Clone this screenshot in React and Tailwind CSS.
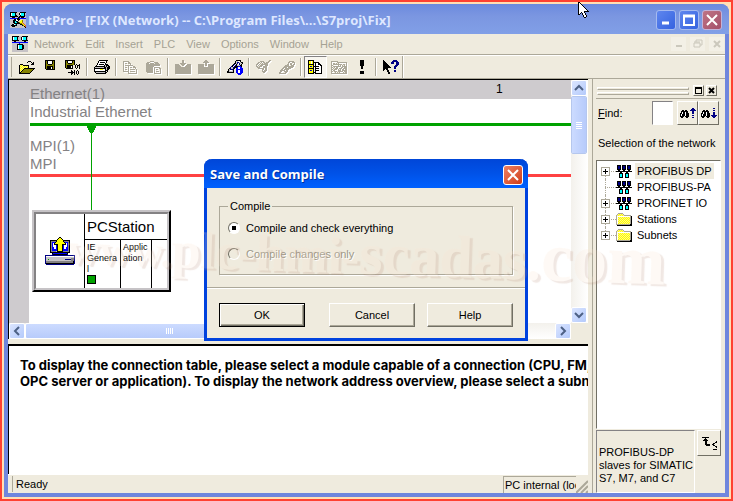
import clsx from "clsx";

const COLORS = {
  k: "#000000",
  w: "#ffffff",
  y: "#ffff00",
  Y: "#fff784",
  o: "#848200",
  g: "#848284",
  s: "#c6c3c6",
  b: "#0000ff",
  n: "#000084",
  c: "#00ffff",
  d: "#aca899",
  r: "#e0522d",
  G: "#00a200",
};

const ICONS = {
  app: [
    "kkkkkkkssskkkkkk",
    "kwccckssskwcccks",
    "kwccckssskwcccks",
    "kwccckkssskccck.",
    "kkkkkkkkskkkkkks",
    "sskkkssskkskkkss",
    "bbbbbbbkkbbbbbbb",
    "sssskkwkkksYssss",
    "ssskkkwwksYyosss",
    "ssskkckksYyyosss",
    "ssskkcckkoyyrsss",
    "sssskkkkkkooyrss",
    "sskkwckssskkoyrs",
    "skkkkkkssssskoyr",
    "sskkkssssssssskr",
    "sssssssssssssssk",
  ],
  network: [
    "kkkkkkkssskkkkkk",
    "kwccckssskwcccks",
    "kwccckssskwcccks",
    "kwccckssskwcccks",
    "kkkkkkkssskkkkkk",
    "sskksssssssskkss",
    "bbbbbbbbbbbbbbbb",
    "sssssssbssssssss",
    "ssssskkkkkksssss",
    "ssssskwccckkssss",
    "ssssskwccckkssss",
    "ssssskwccckkssss",
    "ssssskwccckkssss",
    "ssssskkkkkksssss",
    "ssssssssssssssss",
    "ssssssssssssssss",
  ],
  open: [
    ".........kkk....",
    "........k...k.k.",
    ".............kk.",
    ".kkk........kkk.",
    "kYyYkkkkkk......",
    "kyYyYyYyYk......",
    "kYyYyYyYyk......",
    "kyYyYkkkkkkkkkkk",
    "kYyYkoooooooook.",
    "kyYkoooooooook..",
    "kYkoooooooook...",
    "kkoooooooook....",
    "kkkkkkkkkkk.....",
  ],
  save: [
    "kkkkkkkkkk",
    "kokwwwwkok",
    "kokwwwwkok",
    "kokwwwwkok",
    "kookkkkook",
    "kooooooook",
    "kokkkkkkok",
    "kokkkkwkok",
    "kokkkkwkok",
    ".kkkkkkkkk",
    "..........",
    "..........",
    "..........",
    "..........",
    "..........",
  ],
  saveCompile: [
    "kkkkkkkkkk......",
    "kokwwwwkok......",
    "kokwwwwkok......",
    "kookkkkook......",
    "kooooooook.k..k.",
    "kokkkkkk..k.kkk.",
    "kokkkkwk..k.k.k.",
    "kokkkkwk..k.k.k.",
    ".kkkkkkk...k..k.",
    "................",
    "......k..k..k...",
    "......kk.k.k.k..",
    "...kkkkkkk.k.k..",
    "......kk.k.k.k..",
    "......k..k..k...",
  ],
  print: [
    ".....kkkkkkkkk..",
    "....kwwwwwwwk...",
    "....kwkkkkkwk...",
    "...kwwwwwwwk....",
    "...kwkkkkkwkkk..",
    "..kwwwwwwwkskkk.",
    ".kkkkkkkkkkskskk",
    "kssssssssskkskkk",
    "kkkkkkkkkkkkskkk",
    "kwwwwwyyywwkskk.",
    "kwwwwwwwwwwkkk..",
    "kkkkkkkkkkkk.k..",
    ".kssssssssskk...",
    "..kkkkkkkkkk....",
  ],
  copy: [
    "dddddd.........",
    "d....dd........",
    "d.dd.ddd.......",
    "d......d.......",
    "d.dddddddd.....",
    "d....d....dd...",
    "d.dd.d.dd.ddd..",
    "d....d......d..",
    "d.dd.d.ddddd.d.",
    "d....d.......d.",
    "dddddd.ddddd.d.",
    ".....d.......d.",
    ".....ddddddddd.",
  ],
  paste: [
    "....dddd.......",
    ".ddd....dddd...",
    "ddd.dddd.dddd..",
    "dddddddddddddd.",
    "dddddddddddddd.",
    "dddddddd.......",
    "ddddddd.dddddd.",
    "ddddddd.d....dd",
    "ddddddd.d.dd..d",
    "ddddddd.d.....d",
    "ddddddd.d.ddd.d",
    ".dddddd.d.....d",
    "........ddddddd",
  ],
  download: [
    ".......dd.......",
    ".......dd.......",
    ".......dd.......",
    ".....dddddd.....",
    "dddd..dddd..dddd",
    "ddddd..dd..ddddd",
    "dddddd....dddddd",
    "dddddddddddddddd",
    "dddddddddddddddd",
    "dddddddddddddddd",
    "dddddddddddddddd",
    "dddddddddddddddd",
    "dddddddddddddddd",
    "dddddddddddddddd",
  ],
  upload: [
    ".......dd.......",
    "......dddd......",
    ".....dddddd.....",
    ".......dd.......",
    "dddddd.dd.dddddd",
    "dddddd.dd.dddddd",
    "dddddd....dddddd",
    "dddddddddddddddd",
    "dddddddddddddddd",
    "dddddddddddddddd",
    "dddddddddddddddd",
    "dddddddddddddddd",
    "dddddddddddddddd",
    "dddddddddddddddd",
  ],
  stationInfo: [
    ".........kkkkk..",
    "........ksswwk..",
    "........ksnnsskk",
    ".......kksnwnssk",
    "......kn.kswnsk.",
    ".....knwnkssskk.",
    "....nkwnkkkbbbk.",
    "...nssnkkkbwwbb.",
    "..knssnk.bbwwbbb",
    ".ksnnnk..bbbbbbb",
    ".kswwsk..bbwwbbb",
    "kkssssk..bbwwbbb",
    "kkkkkkk..bbwwbbb",
    "..........bbbbb.",
    "...........bbb..",
  ],
  plug: [
    ".............dd.",
    "....dddd....dd..",
    "..dd.d.dd.ddd...",
    ".dd.d.d.dddd....",
    "dd.d.ddddddd....",
    "d.d.ddd..ddd....",
    "dd.ddd.dddd.....",
    ".ddd...dddd.....",
    "..dddddd.dd.....",
    "......dd.dd.....",
    "......d.ddd.....",
    "......dddd......",
    ".......dd.......",
    "................",
  ],
  connect: [
    "..........ddddd.",
    ".........dd..ddd",
    ".........d.dd..d",
    "........dd.dd.dd",
    "......dddd..ddd.",
    ".....dddddddddd.",
    "....dddd.ddddd..",
    "...dd.dddddd....",
    "..dd.ddddd......",
    ".ddddd.dd.......",
    ".dd..dddd.......",
    "dd....dd........",
    "ddddddd.........",
  ],
  catalog: [
    "kkkkkk.........",
    "kyywyk.........",
    "kyywykkkkkk....",
    "kyywyk.kwwkk...",
    "kkkkkk.kwwkkk..",
    "kyyyyk.kwwwwkk.",
    "kynbykkkkkkwwk.",
    "kyyyyk.kwwwwwk.",
    "kkkkkk.kkkkwwk.",
    "kyyyyk.kwwwwwk.",
    "kynbyk.kkkkwwk.",
    "kyyyyk.kwwwwwk.",
    "kyyyykkkwwwwwk.",
    "kkkkkk.kkkkkkk.",
  ],
  netView: [
    "ddddddd.........",
    "d.....dddddddddd",
    "d.dd.d.d.......d",
    "d.ddddddddd.dd.d",
    "dd.....d.d.d.d.d",
    "d.dddddddd.ddddd",
    "dd.d.dd...dd.ddd",
    "d.d.ddd.ddd.dddd",
    "dd.ddd.d.d.dd.dd",
    "d.dd...ddd.ddddd",
    "dd.ddd.ddddd.ddd",
    "d...d.d.d...d.dd",
    "dddddddddddddddd",
  ],
  alert: [
    "kkkk",
    "kkkk",
    "kkkk",
    "kkkk",
    "kkkk",
    "kkkk",
    ".kk.",
    ".kk.",
    ".kk.",
    "....",
    "....",
    "kkkk",
    "kkkk",
    "kkkk",
  ],
  help: [
    "k.........nnnn..",
    "kk.......nnnnnn.",
    "kkk.....nnn..nnn",
    "kkkk....nnn..nnn",
    "kkkkk........nnn",
    "kkkkkk......nnn.",
    "kkkkkkk....nnn..",
    "kkkkkkkk...nn...",
    "kkkkk......nn...",
    "kk.kk...........",
    "k...kk.....nn...",
    "....kk.....nn...",
    ".....kk.........",
    ".....kk.........",
  ],
  findUp: [
    "............nn..",
    "...........nnnn.",
    "..kk.kk...nnnnnn",
    ".kkkkkkk....nn..",
    ".kwkkwkk....nn..",
    "kkwkkwkkk...nn..",
    "kwkkkwkkk.......",
    "kwkkkwkkk...nn..",
    "kkkk.kkkk.......",
    ".kk...kk....nn..",
  ],
  findDown: [
    "............nn..",
    "................",
    "..kk.kk.....nn..",
    ".kkkkkkk........",
    ".kwkkwkk....nn..",
    "kkwkkwkkk...nn..",
    "kwkkkwkkk...nn..",
    "kwkkkwkkk.nnnnnn",
    "kkkk.kkkk..nnnn.",
    ".kk...kk....nn..",
  ],
  bus: [
    ".kkkk.kkkk.kkkk.",
    ".knnk.knnk.knnk.",
    ".knnk.knnk.knnk.",
    ".knnk.knnk.knnk.",
    ".kkkk.kkkk.kkkk.",
    "..kk...kk...kk..",
    "kkkkkkkkkkkkkkkk",
    "....kk....kk....",
    "...kkkk..kkkk...",
    "...kcck..kcck...",
    "...kcck..kcck...",
    "...kcck..kcck...",
    "...kkkk..kkkk...",
  ],
  folder: [
    "..ddddd.........",
    ".dYyYyYd........",
    "dYyYyYyYddddddd.",
    "dwwwwwwwwwwwwwdk",
    "dwyYyYyYyYyYyYdk",
    "dwYyYyYyYyYyYydk",
    "dwyYyYyYyYyYyYdk",
    "dwYyYyYyYyYyYydk",
    "dwyYyYyYyYyYyYdk",
    "dwYyYyYyYyYyYydk",
    "dwyYyYyYyYyYyYdk",
    "ddddddddddddddkk",
    ".kkkkkkkkkkkkkkk",
  ],
  hint: [
    "kkkkkkk........",
    "...k...........",
    "..kkk..........",
    ".kkkkk.........",
    "...kk.........k",
    "...kk........kk",
    "...kk......kk..",
    "...kkkkk..kk...",
    "....kkkk...kk..",
    ".............kk",
    "..............k",
    "...............",
    "...........kkkk",
  ],
  station: [
    "..............kk..............",
    ".............kyyk.............",
    "............kyyyyk............",
    ".....kkkkkkkyyyyyykkkkkkk.....",
    ".....kgggggkyyyyyykgggggk.....",
    ".....kgbbbkyyyyyyyykbbbgk.....",
    ".....kgbwkyyyyyyyyyykwbgk.....",
    ".....kgbwkkkkyyyykkkkwbgk.....",
    ".....kgbwwwbkyyyykbwwwbgk.....",
    ".....kgbwwwbkyyyykbwwwbgk.....",
    ".....kgbbwwbkyyyykbwwbbgk.....",
    ".....kgbbwwbkyyyykbwwbbgk.....",
    ".....kgbbbbbkyyyykbbbbbgk.....",
    ".....kgbbbbbkyyyykbbbbbgk.....",
    ".....kgggggskkkkkkggggggk.....",
    ".....kkkkkkkkkkkkkkkkkkkk.....",
    ".......kbbbbbbbbbbbbbbk.......",
    ".......nkkkkkkkkkkkkkkn.......",
    "nnnnnnnnnnnnnnnnnnnnnnnnnnnnnn",
    "nwwwwwwwwwwwwwwwwwwwwwwwwwwwwn",
    "nssssssssssssssssssssssssssssn",
    "nsssssssssssssssssssssssssgggn",
    "nssGssssssssssssssssnnnnnngggn",
    "nsssssssssssssssssssssssssgggn",
    "ngggggggggggggggggggggggggggkn",
    "ngggggggggggggggggggggggggggkn",
    "nkkkkkkkkkkkkkkkkkkkkkkkkkkkkn",
    ".nnnnnnnnnnnnnnnnnnnnnnnnnnnn.",
  ],
  cursor: [
    "kk..........",
    "kwk.........",
    "kwwk........",
    "kwwwk.......",
    "kwwwwk......",
    "kwwwwwk.....",
    "kwwwwwwk....",
    "kwwwwwwwk...",
    "kwwwwwwwwk..",
    "kwwwwwkkkkk.",
    "kwwkwwk.....",
    "kwk.kwwk....",
    "kk..kwwk....",
    ".....kwwk...",
    ".....kwwk...",
    "......kk....",
  ],
};

function Pixels({ name, className }) {
  const rows = ICONS[name];
  const width = rows[0].length;
  const cells = [];

  // join neighbours of the same colour into one rect
  rows.forEach((row, y) => {
    let x = 0;
    while (x < row.length) {
      let end = x + 1;
      while (end < row.length && row[end] === row[x]) end++;
      if (COLORS[row[x]]) {
        cells.push(
          <rect key={`${x}-${y}`} x={x} y={y} width={end - x} height={1} fill={COLORS[row[x]]} />
        );
      }
      x = end;
    }
  });

  return (
    <svg
      width={width}
      height={rows.length}
      viewBox={`0 0 ${width} ${rows.length}`}
      shapeRendering="crispEdges"
      aria-hidden="true"
      className={clsx("shrink-0", className)}
    >
      {cells}
    </svg>
  );
}

const MENUS = ["Network", "Edit", "Insert", "PLC", "View", "Options", "Window", "Help"];

const TOOLS = [
  [
    { icon: "open", label: "Open" },
    { icon: "save", label: "Save" },
    { icon: "saveCompile", label: "Save and compile" },
  ],
  [{ icon: "print", label: "Print" }],
  [
    { icon: "copy", label: "Copy", disabled: true },
    { icon: "paste", label: "Paste", disabled: true },
  ],
  [
    { icon: "download", label: "Download", disabled: true },
    { icon: "upload", label: "Upload", disabled: true },
  ],
  [{ icon: "stationInfo", label: "Station info" }],
  [
    { icon: "plug", label: "Plug", disabled: true },
    { icon: "connect", label: "Connect", disabled: true },
  ],
  [
    { icon: "catalog", label: "Catalog", pressed: true },
    { icon: "netView", label: "Network view", disabled: true },
    { icon: "alert", label: "Check consistency" },
  ],
  [{ icon: "help", label: "Help" }],
];

const TREE = [
  { label: "PROFIBUS DP", icon: "bus", expandable: true, selected: true },
  { label: "PROFIBUS-PA", icon: "bus" },
  { label: "PROFINET IO", icon: "bus", expandable: true },
  { label: "Stations", icon: "folder", expandable: true },
  { label: "Subnets", icon: "folder", expandable: true },
];

function CaptionButton({ label, close, children, className }) {
  return (
    <button
      aria-label={label}
      className={clsx(
        "flex size-5 items-center justify-center rounded-[3px] border",
        close ? "" : "border-[#a5baf0] bg-linear-to-br from-[#5f86ee] to-[#3562e0]",
        className
      )}
    >
      <svg width="14" height="14" viewBox="0 0 14 14" fill="none" stroke="#fff" strokeWidth="2" aria-hidden="true">
        {children}
      </svg>
    </button>
  );
}

function TitleBar() {
  return (
    <header className="flex h-[30px] shrink-0 items-center gap-0.5 rounded-t-md bg-linear-to-b from-[#6b8ade] via-[#7b96e1] via-40% to-[#819fe7] pt-0.5 pr-[7px] pl-1.5">
      <Pixels name="app" />
      <h1 className="flex-1 truncate pt-0.5 font-['Open_Sans',sans-serif] text-[13px] font-bold text-[#dee7ff]">
        NetPro - [FIX (Network) -- C:\Program Files\...\S7proj\Fix]
      </h1>
      <div className="flex gap-[3px]">
        <CaptionButton label="Minimize">
          <path d="M3 10h7" strokeWidth="3" />
        </CaptionButton>
        <CaptionButton label="Maximize">
          <path d="M2 3h10v9H2z" />
          <path d="M1 3h12" strokeWidth="3" />
        </CaptionButton>
        <CaptionButton label="Close" close className="border-[#c3b3d8] bg-linear-to-br from-[#bf7486] to-[#a4506a]">
          <path d="M2 2l10 10M12 2L2 12" />
        </CaptionButton>
      </div>
    </header>
  );
}

function MenuBar() {
  return (
    <nav className="flex h-[21px] shrink-0 items-center border-b border-[#aca899] pr-px pb-px pl-1">
      <Pixels name="network" />
      <div className="ml-1.5 flex flex-1 gap-[11px] leading-4 text-[#a5a294]">
        {MENUS.map((menu) => (
          <button key={menu}>{menu}</button>
        ))}
      </div>
      <div className="flex gap-1">
        <button aria-label="Minimize document" className="flex h-3.5 w-[15px] items-center justify-center bg-[#f3f0e6]">
          <svg width="8" height="8" stroke="#cbc8bc" strokeWidth="2" aria-hidden="true">
            <path d="M1 6h6" />
          </svg>
        </button>
        <button aria-label="Restore document" className="flex h-3.5 w-[15px] items-center justify-center bg-[#f3f0e6]">
          <svg width="10" height="9" fill="none" stroke="#cbc8bc" aria-hidden="true">
            <path d="M3 3V1h6v5H7M1 4h6v4H1zM1 3h6" />
          </svg>
        </button>
        <button aria-label="Close document" className="flex h-3.5 w-[15px] items-center justify-center bg-[#f3f0e6]">
          <svg width="8" height="8" stroke="#cbc8bc" strokeWidth="2" aria-hidden="true">
            <path d="M1 1l6 6M7 1L1 7" />
          </svg>
        </button>
      </div>
    </nav>
  );
}

function ToolBar() {
  return (
    <div className="flex h-6 shrink-0 items-center border-y border-t-white border-b-[#aca899] pl-[3px]">
      <span className="mr-[3px] h-5 w-px border-r border-[#aca899]" />
      {TOOLS.map((group, i) => (
        <div key={group[0].icon} className="flex items-center">
          {i > 0 && <span className="mx-0.5 h-[18px] w-0.5 border-r border-l border-r-white border-l-[#aca899]" />}
          {group.map((tool) => (
            <button
              key={tool.icon}
              aria-label={tool.label}
              disabled={tool.disabled}
              className={clsx(
                "flex h-[22px] w-[23px] items-center justify-center",
                tool.pressed && "border border-t-[#848284] border-r-white border-b-white border-l-[#848284] bg-[#f8f6f0]"
              )}
            >
              <Pixels name={tool.icon} className={tool.disabled && "drop-shadow-[1px_1px_0_#fff]"} />
            </button>
          ))}
        </div>
      ))}
      <span className="h-[22px] w-0.5 border-r border-l border-r-white border-l-[#aca899]" />
    </div>
  );
}

function ScrollButton({ label, path }) {
  return (
    <button
      aria-label={label}
      className="flex size-4 shrink-0 items-center justify-center rounded-[2px] border border-white bg-linear-to-br from-[#dbe5ff] to-[#b4cafb]"
    >
      <svg width="10" height="10" viewBox="0 0 10 10" fill="none" stroke="#4d6185" strokeWidth="2" aria-hidden="true">
        <path d={path} />
      </svg>
    </button>
  );
}

function PcStation() {
  return (
    <div className="absolute top-[130px] left-[23px] flex h-[82px] w-[139px] border-2 border-t-[#c6c3c6] border-r-black border-b-black border-l-[#c6c3c6] bg-[#c6c3c6] text-black">
      <div className="flex flex-1 border-2 border-t-[#848284] border-r-[#c6c3c6] border-b-[#c6c3c6] border-l-[#848284] bg-white">
        <div className="flex w-[49px] items-center justify-center border-r border-black">
          <Pixels name="station" />
        </div>
        <div className="flex flex-1 flex-col">
          <div className="h-[26px] border-b border-black pl-0.5 text-[15px] leading-[26px]">PCStation</div>
          <div className="flex flex-1 text-[9px] leading-[11px]">
            <div className="w-9 border-r border-black pt-0.5 pl-0.5">
              IE
              <br />
              Genera
              <br />l
              <span className="block size-[9px] border border-black bg-[#00a200]" />
            </div>
            <div className="w-[31px] border-r border-black pt-0.5 pl-0.5">
              Applic
              <br />
              ation
            </div>
          </div>
        </div>
      </div>
    </div>
  );
}

function NetworkCanvas() {
  return (
    <div className="flex h-[260px] shrink-0 flex-col border-t border-l border-black">
      <div className="flex flex-1">
        <div className="relative flex-1 overflow-hidden bg-white text-[15px] leading-[18px] text-[#848284]">
          <div className="h-[19px] bg-[#cecbce]" />
          <div className="absolute inset-y-0 left-0 w-5 bg-[#cecbce]" />
          <span className="absolute top-0 left-[487px] text-xs leading-[18px] text-black">1</span>
          <p className="absolute top-[5px] left-[21px]">
            Ethernet(1)
            <br />
            Industrial Ethernet
          </p>
          <div className="absolute top-[43px] right-0 left-[21px] h-[3px] bg-[#00a200]" />
          <p className="absolute top-[57px] left-[21px]">
            MPI(1)
            <br />
            MPI
          </p>
          <div className="absolute top-[94px] right-0 left-[21px] h-[3px] bg-[#ff4142]" />
          <svg
            className="absolute top-[45px] left-[77px]"
            width="11"
            height="86"
            fill="#00a200"
            shapeRendering="crispEdges"
            aria-hidden="true"
          >
            <path d="M1 0h9v2L7 8H4L1 2z" />
            <path d="M5 0h1v86H5z" />
          </svg>
          <PcStation />
        </div>
        <div className="flex w-[17px] flex-col bg-linear-to-r from-[#f3f1ec] to-white">
          <ScrollButton label="Scroll up" path="M1 7l4-4 4 4" />
          <div className="flex h-[58px] w-4 flex-col items-center justify-center gap-px rounded-[2px] border border-white bg-linear-to-r from-[#ccdbff] to-[#b7cbfb] outline-1 -outline-offset-1 outline-[#b5c7ee]">
            <span className="h-px w-1.5 bg-white" />
            <span className="h-px w-1.5 bg-white" />
            <span className="h-px w-1.5 bg-white" />
            <span className="h-px w-1.5 bg-white" />
          </div>
          <div className="flex-1" />
          <ScrollButton label="Scroll down" path="M1 3l4 4 4-4" />
        </div>
      </div>
      <div className="flex h-4 bg-[#efebde] pr-[17px]">
        <div className="flex flex-1 bg-linear-to-b from-[#f3f1ec] to-white">
          <ScrollButton label="Scroll left" path="M7 1L3 5l4 4" />
          <div className="flex w-[288px] items-center justify-center gap-px rounded-[2px] border border-white bg-linear-to-b from-[#ccdbff] to-[#b7cbfb]">
            <span className="h-1.5 w-px bg-white" />
            <span className="h-1.5 w-px bg-white" />
            <span className="h-1.5 w-px bg-white" />
            <span className="h-1.5 w-px bg-white" />
          </div>
          <div className="flex-1" />
          <ScrollButton label="Scroll right" path="M3 1l4 4-4 4" />
        </div>
      </div>
    </div>
  );
}

function DetailPane() {
  return (
    <div className="mt-[5px] flex-1 overflow-hidden border-t-2 border-l border-black bg-white pt-[11px] pl-[11px] font-['Inter',sans-serif] text-[13px] leading-4 font-bold whitespace-nowrap">
      To display the connection table, please select a module capable of a connection (CPU, FM,
      <br />
      OPC server or application). To display the network address overview, please select a subnet
    </div>
  );
}

function StatusBar() {
  return (
    <footer className="flex h-[19px] shrink-0 items-center border-t border-white pl-1">
      <span className="h-4 w-px bg-[#aca899]" />
      <span className="flex-1 pl-[3px]">Ready</span>
      <span className="w-[73px] overflow-hidden border-t border-l border-[#aca899] pl-px leading-4 whitespace-nowrap">
        PC internal (local)
      </span>
      <svg width="12" height="13" stroke="#aca899" strokeWidth="2" className="self-end" aria-hidden="true">
        <path d="M0 13L12 1M5 13l7-7M10 13l2-2" />
      </svg>
    </footer>
  );
}

function Catalog() {
  const raised = "border border-t-white border-r-[#716f64] border-b-[#716f64] border-l-white";
  const sunken = "border border-t-[#848284] border-r-white border-b-white border-l-[#848284]";

  return (
    <aside className="ml-1 flex w-[133px] shrink-0 flex-col border-l border-[#aca899] pr-1 pl-[3px]">
      <div className="flex h-5 items-center gap-0.5 border-b border-[#aca899] pt-1 pl-px">
        <div className="mr-0.5 flex flex-1 flex-col gap-0.5">
          <span className="h-[3px] border border-t-white border-r-[#aca899] border-b-[#aca899] border-l-white" />
          <span className="h-[3px] border border-t-white border-r-[#aca899] border-b-[#aca899] border-l-white" />
        </div>
        <button aria-label="Float catalog" className={clsx("flex size-[11px] items-center justify-center", raised)}>
          <svg width="7" height="7" fill="none" stroke="#000" shapeRendering="crispEdges" aria-hidden="true">
            <path d="M.5 1.5h6v5h-6zM0 .5h7" />
          </svg>
        </button>
        <button aria-label="Close catalog" className={clsx("mr-1 flex size-[11px] items-center justify-center", raised)}>
          <svg width="7" height="7" stroke="#000" strokeWidth="2" aria-hidden="true">
            <path d="M1 1l5 5M6 1L1 6" />
          </svg>
        </button>
      </div>

      <div className="mt-0.5 flex h-6 items-center pr-0.5">
        <label htmlFor="find" className="flex-1 pl-0.5">
          <u>F</u>ind:
        </label>
        <input id="find" className={clsx("mr-1 h-6 w-[21px] bg-white", sunken)} />
        <button aria-label="Find previous" className={clsx("flex h-6 w-[21px] items-center justify-center", raised)}>
          <Pixels name="findUp" />
        </button>
        <button aria-label="Find next" className={clsx("flex h-6 w-[21px] items-center justify-center", raised)}>
          <Pixels name="findDown" />
        </button>
      </div>

      <p className="mt-2.5 mb-[9px] pl-0.5 leading-4 whitespace-nowrap">Selection of the network</p>

      <ul className="flex-1 border border-t-[#716f64] border-r-white border-b-white border-l-[#716f64] bg-white py-0.5 pl-1">
        {TREE.map((node, i) => (
          <li key={node.label} className="flex h-4 items-center">
            <span className="relative flex h-4 w-[15px] items-center">
              <span
                className={clsx(
                  "absolute left-1 w-0 border-l border-dotted border-[#aca899]",
                  i === 0 ? "top-2 bottom-0" : i === TREE.length - 1 ? "top-0 bottom-2" : "inset-y-0"
                )}
              />
              <span className="absolute right-0 left-1 border-t border-dotted border-[#aca899]" />
              {node.expandable && (
                <button aria-label={`Expand ${node.label}`} className="relative size-[9px] border border-[#aca899] bg-white">
                  <svg
                    width="7"
                    height="7"
                    stroke="#000"
                    shapeRendering="crispEdges"
                    aria-hidden="true"
                    className="block"
                  >
                    <path d="M1 3.5h5M3.5 1v5" />
                  </svg>
                </button>
              )}
            </span>
            <Pixels name={node.icon} className="mr-[3px]" />
            <span className={clsx("px-0.5 leading-4", node.selected && "bg-[#efebde]")}>{node.label}</span>
          </li>
        ))}
      </ul>

      <div className="mt-px flex items-start gap-0.5">
        <p className={clsx("h-[63px] flex-1 pt-[15px] pl-0.5 leading-[13px] whitespace-nowrap", sunken)}>
          PROFIBUS-DP
          <br />
          slaves for SIMATIC
          <br />
          S7, M7, and C7
        </p>
        <button aria-label="Show hint" className={clsx("flex h-[26px] w-6 items-center justify-center", raised)}>
          <Pixels name="hint" />
        </button>
      </div>
    </aside>
  );
}

function DialogButton({ primary, children, className }) {
  return (
    <button
      className={clsx(
        "h-6 w-[87px] border",
        primary
          ? "border-black shadow-[inset_1px_1px_0_#fff,inset_-1px_-1px_0_#716f64,inset_-2px_-2px_0_#aca899]"
          : "border-t-white border-r-[#716f64] border-b-[#716f64] border-l-white shadow-[inset_-1px_-1px_0_#aca899]",
        className
      )}
    >
      {children}
    </button>
  );
}

function RadioOption({ checked, disabled, children }) {
  return (
    <label className={clsx("flex items-center gap-1.5", disabled && "text-[#9c9888] text-shadow-[1px_1px_0_#fff]")}>
      <input
        type="radio"
        name="compile"
        defaultChecked={checked}
        disabled={disabled}
        className={clsx(
          "size-3 appearance-none rounded-full border border-t-[#716f64] border-r-white border-b-white border-l-[#716f64]",
          disabled ? "bg-[#efebde]" : "bg-white checked:bg-radial checked:from-black checked:from-30% checked:to-white checked:to-35%"
        )}
      />
      {children}
    </label>
  );
}

function SaveDialog() {
  return (
    <section
      role="dialog"
      aria-label="Save and Compile"
      className="flex h-[182px] w-[324px] flex-col rounded-t-lg border-3 border-t-0 border-[#0042de] bg-[#efebde]"
    >
      <header className="-mx-[3px] flex h-[29px] items-center rounded-t-lg bg-linear-to-b from-[#0046d8] via-[#0052e8] via-50% to-[#0061ff] pt-0.5 pr-[5px] pl-1.5">
        <h2 className="flex-1 font-['Open_Sans',sans-serif] text-[13px] font-bold text-white text-shadow-[1px_1px_0_#00309c]">
          Save and Compile
        </h2>
        <CaptionButton label="Close dialog" close className="border-white bg-linear-to-br from-[#ee8061] to-[#cf3a12]">
          <path d="M2 2l10 10M12 2L2 12" />
        </CaptionButton>
      </header>
      <fieldset className="mx-3 mt-2.5 h-[77px] border border-[#aca899] px-2 shadow-[1px_1px_0_#fff]">
        <legend className="px-0.5 leading-4">Compile</legend>
        <div className="flex flex-col gap-2.5 pt-1.5 leading-4">
          <RadioOption checked>Compile and check everything</RadioOption>
          <RadioOption disabled>Compile changes only</RadioOption>
        </div>
      </fieldset>
      <hr className="mt-3 h-0.5 border-t border-b border-t-[#aca899] border-b-white" />
      <div className="mt-[14px] flex px-3">
        <DialogButton primary>OK</DialogButton>
        <DialogButton className="ml-6">Cancel</DialogButton>
        <DialogButton className="ml-3">Help</DialogButton>
      </div>
    </section>
  );
}

export default function App() {
  return (
    <div className="relative flex h-screen min-h-[480px] flex-col overflow-hidden border-2 border-[#ff4131] bg-[#ffdfb5] p-0.5 font-['Liberation_Sans',Arial,sans-serif] text-[11px] text-black">
      <main className="flex flex-1 flex-col overflow-hidden rounded-t-lg bg-[#6f86dd]">
        <TitleBar />
        <div className="mx-1 mb-1 flex flex-1 flex-col overflow-hidden bg-[#efebde]">
          <MenuBar />
          <ToolBar />
          <div className="flex min-h-0 flex-1">
            <div className="flex min-w-0 flex-1 flex-col">
              <NetworkCanvas />
              <DetailPane />
              <StatusBar />
            </div>
            <Catalog />
          </div>
        </div>
      </main>

      <div className="absolute inset-0 flex items-center justify-center pr-px pb-px">
        <SaveDialog />
      </div>

      {/* watermark, grows towards the right */}
      <div className="pointer-events-none absolute inset-0 flex items-center justify-center overflow-hidden">
        <span className="rotate-2 font-['Liberation_Serif',serif] leading-none font-bold whitespace-nowrap text-[#fbe6d2] opacity-20 text-shadow-[3px_2px_1px_#b98d78]">
          <span className="text-[44px]">www.</span>
          <span className="text-[52px]">plc-hmi-</span>
          <span className="text-[60px]">scadas.</span>
          <span className="text-[70px]">com</span>
        </span>
      </div>

      <Pixels name="cursor" className="absolute top-0 left-[576px]" />
    </div>
  );
}
